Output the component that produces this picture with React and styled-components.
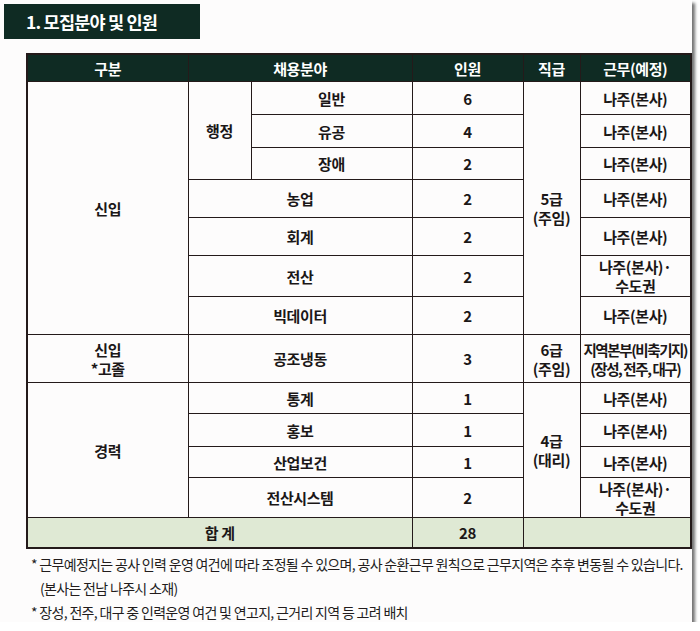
import React from "react";
import styled, { createGlobalStyle } from "styled-components";

const Global = createGlobalStyle`
  html, body { margin: 0; padding: 0; background: #ffffff; }
  body { font-family: "Noto Sans CJK KR", "Noto Sans", sans-serif; color: #1b1717; }
`;

const Card = styled.div`
  width: 692px;
  height: 622px;
  box-sizing: border-box;
  padding: 4px 0 0 4px;
  background: #fdfcfc;
  box-shadow: 3px 3px 3px rgba(0, 0, 0, 0.55);
  overflow: hidden;
`;

const TitleBox = styled.div`
  width: 196px;
  height: 35px;
  box-sizing: border-box;
  background: #0f2b23;
  color: #ffffff;
  display: flex;
  align-items: center;
  padding-left: 22px;
  font-size: 17.5px;
  font-weight: 700;
  letter-spacing: -0.8px;
`;

const Table = styled.table`
  margin: 14px 0 0 22px;
  width: 664px;
  border-collapse: collapse;
  table-layout: fixed;
  border: 2px solid #241a1a;
  font-size: 15px;
  font-weight: 600;
  letter-spacing: -0.4px;
`;

const Th = styled.th`
  background: #0f2b23;
  color: #ffffff;
  font-weight: 700;
  height: 26px;
  padding: 0;
  border: 1px solid #241a1a;
  border-left-color: #3a3030;
  text-align: center;
  vertical-align: middle;
  line-height: 1;
`;

const Tr = styled.tr`
  height: ${(p) => p.$h}px;
`;

const Td = styled.td`
  border: 1px solid #241a1a;
  padding: 0;
  text-align: center;
  vertical-align: middle;
  line-height: 19px;
  background: ${(p) => (p.$total ? "#dfe9d4" : "transparent")};
  font-weight: ${(p) => (p.$bold ? 700 : 600)};
  letter-spacing: ${(p) => (p.$tight ? "-1.4px" : "inherit")};
  font-size: ${(p) => (p.$tight ? "14.5px" : "inherit")};
`;

const Notes = styled.div`
  margin: 3px 0 0 27px;
  font-size: 14px;
  letter-spacing: -0.68px;
  color: #221c1c;
`;

const NoteLine = styled.div`
  height: 24px;
  line-height: 24px;
  padding-left: ${(p) => (p.$indent ? "9px" : "0")};
  white-space: nowrap;
`;

const NJ = "나주(본사)";

export default function App() {
  return (
    <>
      <Global />
      <Card>
        <TitleBox>1. 모집분야 및 인원</TitleBox>
        <Table>
          <colgroup>
            <col style={{ width: 161 }} />
            <col style={{ width: 63 }} />
            <col style={{ width: 161 }} />
            <col style={{ width: 111 }} />
            <col style={{ width: 57 }} />
            <col style={{ width: 111 }} />
          </colgroup>
          <thead>
            <tr>
              <Th>구분</Th>
              <Th colSpan={2}>채용분야</Th>
              <Th>인원</Th>
              <Th>직급</Th>
              <Th>근무(예정)</Th>
            </tr>
          </thead>
          <tbody>
            <Tr $h={33}>
              <Td rowSpan={7}>신입</Td>
              <Td rowSpan={3}>행정</Td>
              <Td>일반</Td>
              <Td>6</Td>
              <Td rowSpan={7}>
                5급
                <br />
                (주임)
              </Td>
              <Td>{NJ}</Td>
            </Tr>
            <Tr $h={33}>
              <Td>유공</Td>
              <Td>4</Td>
              <Td>{NJ}</Td>
            </Tr>
            <Tr $h={32}>
              <Td>장애</Td>
              <Td>2</Td>
              <Td>{NJ}</Td>
            </Tr>
            <Tr $h={38}>
              <Td colSpan={2}>농업</Td>
              <Td>2</Td>
              <Td>{NJ}</Td>
            </Tr>
            <Tr $h={38}>
              <Td colSpan={2}>회계</Td>
              <Td>2</Td>
              <Td>{NJ}</Td>
            </Tr>
            <Tr $h={41}>
              <Td colSpan={2}>전산</Td>
              <Td>2</Td>
              <Td>
                {NJ}·
                <br />
                수도권
              </Td>
            </Tr>
            <Tr $h={38}>
              <Td colSpan={2}>빅데이터</Td>
              <Td>2</Td>
              <Td>{NJ}</Td>
            </Tr>
            <Tr $h={48}>
              <Td>
                신입
                <br />
                *고졸
              </Td>
              <Td colSpan={2}>공조냉동</Td>
              <Td>3</Td>
              <Td>
                6급
                <br />
                (주임)
              </Td>
              <Td $tight>
                지역본부(비축기지)
                <br />
                (장성, 전주, 대구)
              </Td>
            </Tr>
            <Tr $h={31}>
              <Td rowSpan={4}>경력</Td>
              <Td colSpan={2}>통계</Td>
              <Td>1</Td>
              <Td rowSpan={4}>
                4급
                <br />
                (대리)
              </Td>
              <Td>{NJ}</Td>
            </Tr>
            <Tr $h={33}>
              <Td colSpan={2}>홍보</Td>
              <Td>1</Td>
              <Td>{NJ}</Td>
            </Tr>
            <Tr $h={31}>
              <Td colSpan={2}>산업보건</Td>
              <Td>1</Td>
              <Td>{NJ}</Td>
            </Tr>
            <Tr $h={40}>
              <Td colSpan={2}>전산시스템</Td>
              <Td>2</Td>
              <Td>
                {NJ}·
                <br />
                수도권
              </Td>
            </Tr>
            <Tr $h={30}>
              <Td colSpan={3} $total $bold>
                합 계
              </Td>
              <Td $total $bold>
                28
              </Td>
              <Td colSpan={2} $total></Td>
            </Tr>
          </tbody>
        </Table>
        <Notes>
          <NoteLine>
            * 근무예정지는 공사 인력 운영 여건에 따라 조정될 수 있으며, 공사 순환근무 원칙으로 근무지역은 추후 변동될 수 있습니다.
          </NoteLine>
          <NoteLine $indent>(본사는 전남 나주시 소재)</NoteLine>
          <NoteLine>* 장성, 전주, 대구 중 인력운영 여건 및 연고지, 근거리 지역 등 고려 배치</NoteLine>
        </Notes>
      </Card>
    </>
  );
}
